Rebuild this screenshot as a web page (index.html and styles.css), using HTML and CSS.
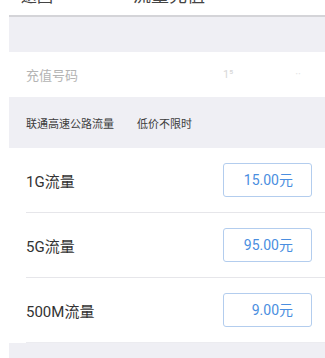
FILE: index.html
```html
<!DOCTYPE html>
<html lang="zh-CN">
<head>
<meta charset="utf-8">
<title>流量充值</title>
<link rel="stylesheet" href="styles.css">
</head>
<body>
<div class="app">
  <header class="topbar">
    <span class="back">返回</span>
    <span class="title">流量充值</span>
  </header>
  <div class="spacer"></div>
  <div class="phone-row">
    <span class="phone-label">充值号码</span>
    <span class="phone-value">1⁵</span>
    <span class="phone-tail">··</span>
  </div>
  <div class="notice">
    <span>联通高速公路流量</span>
    <span class="notice-sub">低价不限时</span>
  </div>
  <ul class="plans">
    <li class="plan">
      <span class="plan-name">1G流量</span>
      <span class="price">15.00元</span>
    </li>
    <li class="plan">
      <span class="plan-name">5G流量</span>
      <span class="price">95.00元</span>
    </li>
    <li class="plan">
      <span class="plan-name">500M流量</span>
      <span class="price">9.00元</span>
    </li>
  </ul>
  <div class="footer-gap"></div>
</div>
</body>
</html>
```

FILE: styles.css
```css
html, body {
  margin: 0;
  padding: 0;
  background: #ffffff;
}
body {
  font-family: Roboto, "Noto Sans CJK SC", "Noto Sans", sans-serif;
  color: #333;
}
.app {
  margin-left: 9px;
  background: #efeff4;
  height: 358px;
  overflow: hidden;
  display: flex;
  flex-direction: column;
}
.topbar {
  height: 15px;
  background: #fff;
  border-bottom: 2px solid #d4d4d8;
  position: relative;
  overflow: hidden;
  flex: none;
}
.back {
  position: absolute;
  left: 12px;
  top: -12px;
  font-size: 16px;
  line-height: 18px;
  color: #444;
}
.title {
  position: absolute;
  left: 124px;
  top: -13px;
  font-size: 18px;
  line-height: 18px;
  color: #444;
}
.spacer {
  height: 35px;
  flex: none;
}
.phone-row {
  height: 45px;
  background: #fff;
  display: flex;
  align-items: center;
  padding-left: 17px;
  flex: none;
  position: relative;
}
.phone-label {
  font-size: 13px;
  color: #b4b4b4;
}
.phone-value {
  margin-left: 145px;
  font-size: 11px;
  color: #d8d8d8;
}
.phone-tail {
  margin-left: 62px;
  font-size: 11px;
  color: #e2e2e2;
}
.notice {
  height: 51px;
  display: flex;
  align-items: center;
  padding-left: 17px;
  font-size: 11px;
  color: #3c3c3c;
  flex: none;
}
.notice-sub {
  margin-left: 23px;
}
.plans {
  list-style: none;
  margin: 0;
  padding: 0;
  background: #fff;
  flex: none;
}
.plan {
  height: 64px;
  margin-left: 17px;
  padding-right: 13px;
  display: flex;
  align-items: center;
  justify-content: space-between;
  border-bottom: 1px solid #e6e6ea;
}
.plan:last-child {
  border-bottom-color: #ececf0;
}
.plan-name {
  font-size: 15px;
  color: #333;
}
.price {
  box-sizing: border-box;
  width: 89px;
  height: 34px;
  border: 1px solid #b3cdee;
  border-radius: 3px;
  text-align: right;
  padding-right: 18px;
  line-height: 32px;
  font-size: 14px;
  color: #4a8ee0;
}
.footer-gap {
  flex: 1;
}
```
